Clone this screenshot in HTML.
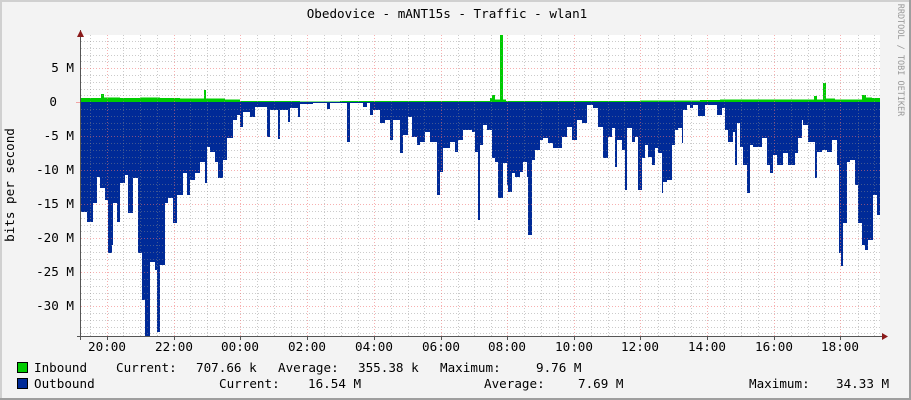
<!DOCTYPE html>
<html><head><meta charset="utf-8"><style>
html,body{margin:0;padding:0;background:#f3f3f3}
svg{display:block}
text{font-family:"DejaVu Sans Mono","Liberation Mono",monospace;font-size:12.6px;fill:#000}
</style></head><body>
<svg width="911" height="400" viewBox="0 0 911 400" xmlns="http://www.w3.org/2000/svg">
<rect x="0" y="0" width="911" height="400" fill="#f3f3f3"/>
<rect x="0" y="0" width="911" height="2" fill="#d0d0d0"/>
<rect x="0" y="0" width="2" height="400" fill="#d0d0d0"/>
<rect x="0" y="398" width="911" height="2" fill="#9e9e9e"/>
<rect x="909" y="0" width="2" height="400" fill="#9e9e9e"/>
<rect x="81" y="35" width="799" height="301" fill="#fff"/>

<path fill="#002a97" d="M81 102V212H87V222H93V203H97V177H100V188H105V200H108V253H112V245H113V203H117V222H120V183H125V175H128V213H133V178H138V253H142V300H145V336H150V262H155V270H157V332H160V265H165V203H168V198H173V223H177V195H183V173H187V195H190V180H195V173H200V162H205V183H207V147H210V152H215V162H218V178H223V160H227V138H233V120H237V115H240V127H243V112H250V117H255V107H267V137H270V110H278V139H280V110H288V122H290V108H298V117H300V104H313V103H327V109H330V103H347V142H350V103H363V107H367V103H370V115H373V110H380V123H385V120H390V140H393V120H400V153H403V135H408V117H412V137H417V145H420V142H425V132H430V142H437V195H440V172H443V148H450V142H455V152H458V140H463V130H472V132H475V152H478V220H480V145H483V125H487V130H492V158H495V162H498V198H503V163H507V185H508V192H512V173H515V177H520V172H523V162H527V177H528V235H532V160H535V150H540V140H543V138H548V143H553V148H562V137H567V127H572V140H577V120H582V123H587V105H593V108H598V127H603V158H608V137H612V128H615V167H617V140H622V150H625V190H627V128H632V142H635V137H638V190H642V158H645V145H648V157H652V165H655V148H658V153H662V193H663V182H667V180H672V145H675V130H678V128H682V143H683V110H687V105H690V108H693V105H698V116H705V105H717V115H722V108H725V130H728V142H733V132H735V165H737V123H740V147H743V165H747V193H750V145H753V147H762V138H767V165H770V173H773V155H777V165H783V153H788V165H795V153H798V138H802V120H803V125H808V142H815V178H817V152H822V150H827V152H832V140H837V165H839V253H841V266H843V223H847V162H850V160H855V185H858V223H862V245H865V250H868V240H873V195H877V215H880V102Z"/>
<path fill="#00cc00" d="M81 102V98H101V94H104V97.5H120V98H140V97.5H160V98H180V98.5H204V90H206V98.5H225V99.5H240V101H300V101.5H340V101H490V98H492V95H495V99.5H500V35H503V99.5H506V101H580V101H640V100.5H700V100H720V99.5H800V99.5H814V96H817V99.5H823V83H826V98.5H835V99.5H862V95H866V97.5H872V98H880V102Z"/>

<g stroke="#8c8c8c" stroke-opacity="0.45" stroke-width="1" stroke-dasharray="1,2">
<path d="M81 41.5H880M81 48.5H880M81 55.5H880M81 61.5H880M81 75.5H880M81 82.5H880M81 89.5H880M81 95.5H880M81 109.5H880M81 116.5H880M81 123.5H880M81 129.5H880M81 143.5H880M81 150.5H880M81 157.5H880M81 163.5H880M81 177.5H880M81 184.5H880M81 191.5H880M81 197.5H880M81 211.5H880M81 218.5H880M81 225.5H880M81 231.5H880M81 245.5H880M81 252.5H880M81 259.5H880M81 265.5H880M81 279.5H880M81 286.5H880M81 293.5H880M81 299.5H880M81 313.5H880M81 320.5H880M81 327.5H880M81 333.5H880"/>
<path d="M90.5 35V336M123.5 35V336M140.5 35V336M157.5 35V336M190.5 35V336M207.5 35V336M224.5 35V336M257.5 35V336M274.5 35V336M291.5 35V336M324.5 35V336M341.5 35V336M358.5 35V336M391.5 35V336M408.5 35V336M424.5 35V336M458.5 35V336M474.5 35V336M491.5 35V336M524.5 35V336M541.5 35V336M558.5 35V336M591.5 35V336M608.5 35V336M624.5 35V336M658.5 35V336M674.5 35V336M691.5 35V336M724.5 35V336M741.5 35V336M758.5 35V336M791.5 35V336M808.5 35V336M824.5 35V336M858.5 35V336M874.5 35V336"/>
</g>
<g stroke="#f07070" stroke-opacity="0.55" stroke-width="1" stroke-dasharray="1,2">
<path d="M81 68.5H880M81 136.5H880M81 170.5H880M81 204.5H880M81 238.5H880M81 272.5H880M81 306.5H880"/>
<path d="M107.5 35V336M174.5 35V336M240.5 35V336M307.5 35V336M374.5 35V336M441.5 35V336M507.5 35V336M574.5 35V336M640.5 35V336M707.5 35V336M774.5 35V336M840.5 35V336"/>
</g>
<path d="M76 102.5H81" stroke="#f07070" stroke-opacity="0.6"/>
<path d="M80.5 30V340M77 336.5H884" stroke="#555" stroke-width="1"/>
<path d="M77 37L80.5 30L84 37Z" fill="#8b1a1a"/>
<path d="M882 333L888 336.5L882 340Z" fill="#8b1a1a"/>
<g stroke="#555"><path d="M107.5 336V340M174.5 336V340M240.5 336V340M307.5 336V340M374.5 336V340M441.5 336V340M507.5 336V340M574.5 336V340M640.5 336V340M707.5 336V340M774.5 336V340M840.5 336V340"/></g>

<text x="447" y="18" text-anchor="middle">Obedovice - mANT15s - Traffic - wlan1</text>
<g text-anchor="end">
<text x="74" y="72">5 M</text>
<text x="57" y="106">0</text>
<text x="74" y="140">-5 M</text>
<text x="74" y="174">-10 M</text>
<text x="74" y="208">-15 M</text>
<text x="74" y="242">-20 M</text>
<text x="74" y="276">-25 M</text>
<text x="74" y="310">-30 M</text>
</g>
<text transform="translate(14,185) rotate(-90)" text-anchor="middle">bits per second</text>
<text transform="translate(898,60) rotate(90)" text-anchor="middle" style="font-size:8.5px;fill:#999">RRDTOOL / TOBI OETIKER</text>
<g text-anchor="middle">
<text x="107" y="351">20:00</text>
<text x="174" y="351">22:00</text>
<text x="240" y="351">00:00</text>
<text x="307" y="351">02:00</text>
<text x="374" y="351">04:00</text>
<text x="441" y="351">06:00</text>
<text x="507" y="351">08:00</text>
<text x="574" y="351">10:00</text>
<text x="640" y="351">12:00</text>
<text x="707" y="351">14:00</text>
<text x="774" y="351">16:00</text>
<text x="840" y="351">18:00</text>
</g>
<rect x="17.5" y="362.5" width="10" height="10" fill="#00cc00" stroke="#000"/>
<rect x="17.5" y="378.5" width="10" height="10" fill="#002a97" stroke="#000"/>
<text x="34" y="372">Inbound</text>
<text x="116" y="372">Current:</text>
<text x="196" y="372">707.66 k</text>
<text x="278" y="372">Average:</text>
<text x="358" y="372">355.38 k</text>
<text x="440" y="372">Maximum:</text>
<text x="536" y="372">9.76 M</text>
<text x="34" y="388">Outbound</text>
<text x="219" y="388">Current:</text>
<text x="308" y="388">16.54 M</text>
<text x="484" y="388">Average:</text>
<text x="578" y="388">7.69 M</text>
<text x="749" y="388">Maximum:</text>
<text x="836" y="388">34.33 M</text>
</svg>
</body></html>
